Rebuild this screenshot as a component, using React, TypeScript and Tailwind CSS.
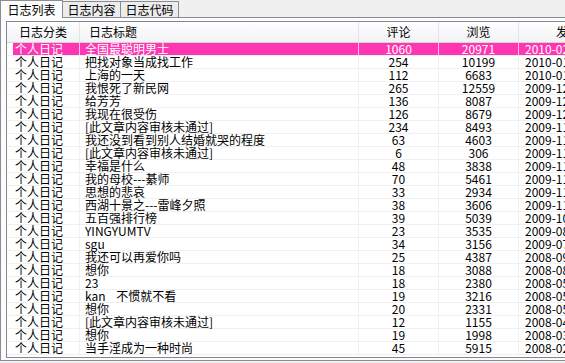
import React from 'react';

type Row = { title: string; comments: number; views: number; date: string };

const rows: Row[] = [
  { title: '全国最聪明男士', comments: 1060, views: 20971, date: '2010-02-10 21:13:05' },
  { title: '把找对象当成找工作', comments: 254, views: 10199, date: '2010-01-22 10:41:37' },
  { title: '上海的一天', comments: 112, views: 6683, date: '2010-01-05 17:20:11' },
  { title: '我恨死了新民网', comments: 265, views: 12559, date: '2009-12-28 09:32:46' },
  { title: '给芳芳', comments: 136, views: 8087, date: '2009-12-19 23:05:18' },
  { title: '我现在很受伤', comments: 126, views: 8679, date: '2009-12-02 14:47:52' },
  { title: '[此文章内容审核未通过]', comments: 234, views: 8493, date: '2009-11-26 11:08:29' },
  { title: '我还没到看到别人结婚就哭的程度', comments: 63, views: 4603, date: '2009-11-21 20:15:40' },
  { title: '[此文章内容审核未通过]', comments: 6, views: 306, date: '2009-11-18 08:59:03' },
  { title: '幸福是什么', comments: 48, views: 3838, date: '2009-11-15 16:24:37' },
  { title: '我的母校---綦师', comments: 70, views: 5461, date: '2009-11-12 13:10:22' },
  { title: '思想的悲哀', comments: 33, views: 2934, date: '2009-11-08 22:41:16' },
  { title: '西湖十景之---雷峰夕照', comments: 38, views: 3606, date: '2009-11-03 10:36:58' },
  { title: '五百强排行榜', comments: 39, views: 5039, date: '2009-10-17 15:02:44' },
  { title: 'YINGYUMTV', comments: 23, views: 3535, date: '2009-08-25 19:48:31' },
  { title: 'sgu', comments: 34, views: 3156, date: '2009-07-30 07:55:09' },
  { title: '我还可以再爱你吗', comments: 25, views: 4387, date: '2008-09-14 21:30:27' },
  { title: '想你', comments: 18, views: 3088, date: '2008-08-06 23:12:50' },
  { title: '23', comments: 18, views: 2380, date: '2008-05-29 12:04:33' },
  { title: 'kan    不惯就不看', comments: 19, views: 3216, date: '2008-05-20 18:27:14' },
  { title: '想你', comments: 20, views: 2331, date: '2008-05-11 09:45:06' },
  { title: '[此文章内容审核未通过]', comments: 12, views: 1155, date: '2008-04-23 14:18:39' },
  { title: '想你', comments: 19, views: 1998, date: '2008-03-16 22:51:57' },
  { title: '当手淫成为一种时尚', comments: 45, views: 5915, date: '2008-02-27 10:33:20' },
];

const tabs = ['日志列表', '日志内容', '日志代码'];

const ListRow = ({ row, selected }: { row: Row; selected: boolean }) => {
  const sep = selected ? 'border-r-[#ffc4e8]' : 'border-r-[#f0f0f0]';
  const bg = selected ? 'bg-[#ff36b2] text-white' : 'text-black';
  return (
    <div className="flex h-[13px] border-b border-[#f0f0f0] leading-[12px] whitespace-pre">
      <div className={`w-[73px] shrink-0 flex border-r ${sep}`}>
        <div className="w-[6px] shrink-0 bg-white" />
        <div className={`flex-1 pl-[2px] ${bg}`}>个人日记</div>
      </div>
      <div className={`w-[279px] shrink-0 pl-[5px] border-r ${sep} ${bg}`}>{row.title}</div>
      <div className={`w-[80px] shrink-0 text-center border-r ${sep} ${bg}`}>{row.comments}</div>
      <div className={`w-[80px] shrink-0 text-center border-r ${sep} ${bg}`}>{row.views}</div>
      <div className={`w-[130px] shrink-0 pl-[6px] ${bg}`}>{row.date}</div>
    </div>
  );
};

export default function App() {
  return (
    <div className="w-[565px] h-[363px] overflow-hidden bg-[#f0f0f0] text-[12px] text-black font-['Noto_Sans_CJK_SC',sans-serif] flex flex-col">
      {/* tab strip */}
      <div className="flex items-end h-[17px] shrink-0">
        {tabs.map((t, i) =>
          i === 0 ? (
            <div
              key={t}
              className="relative z-10 h-[18px] -mb-px w-[63px] border border-b-0 border-[#898c95] bg-[#fcfcfc] flex items-center justify-center leading-[12px]"
            >
              {t}
            </div>
          ) : (
            <div
              key={t}
              className="h-[16px] w-[58px] border border-l-0 border-b-0 border-[#898c95] bg-[#ececec] flex items-center justify-center leading-[12px]"
            >
              {t}
            </div>
          ),
        )}
      </div>

      {/* tab panel */}
      <div className="flex-1 min-h-0 border border-r-0 border-[#898c95] bg-[#fcfcfc] pt-[3px] pl-[5px] pb-[2px] flex flex-col">
        <div className="flex-1 min-h-0 border border-r-0 border-[#828790] bg-white overflow-hidden">
          {/* header */}
          <div className="flex h-[21px] border-b border-[#d5d5d5] bg-gradient-to-b from-white to-[#f1f2f4] items-center whitespace-nowrap">
            <div className="w-[73px] shrink-0 h-full flex items-center justify-center border-r border-[#e3e4e6]">日志分类</div>
            <div className="w-[279px] shrink-0 h-full flex items-center pl-[9px] border-r border-[#e3e4e6]">日志标题</div>
            <div className="w-[80px] shrink-0 h-full flex items-center justify-center border-r border-[#e3e4e6]">评论</div>
            <div className="w-[80px] shrink-0 h-full flex items-center justify-center border-r border-[#e3e4e6]">浏览</div>
            <div className="w-[130px] shrink-0 h-full flex items-center pl-[37px]">发表时间</div>
          </div>
          {rows.map((r, i) => (
            <ListRow key={i} row={r} selected={i === 0} />
          ))}
        </div>
      </div>
      <div className="h-[2px] shrink-0" />
    </div>
  );
}
